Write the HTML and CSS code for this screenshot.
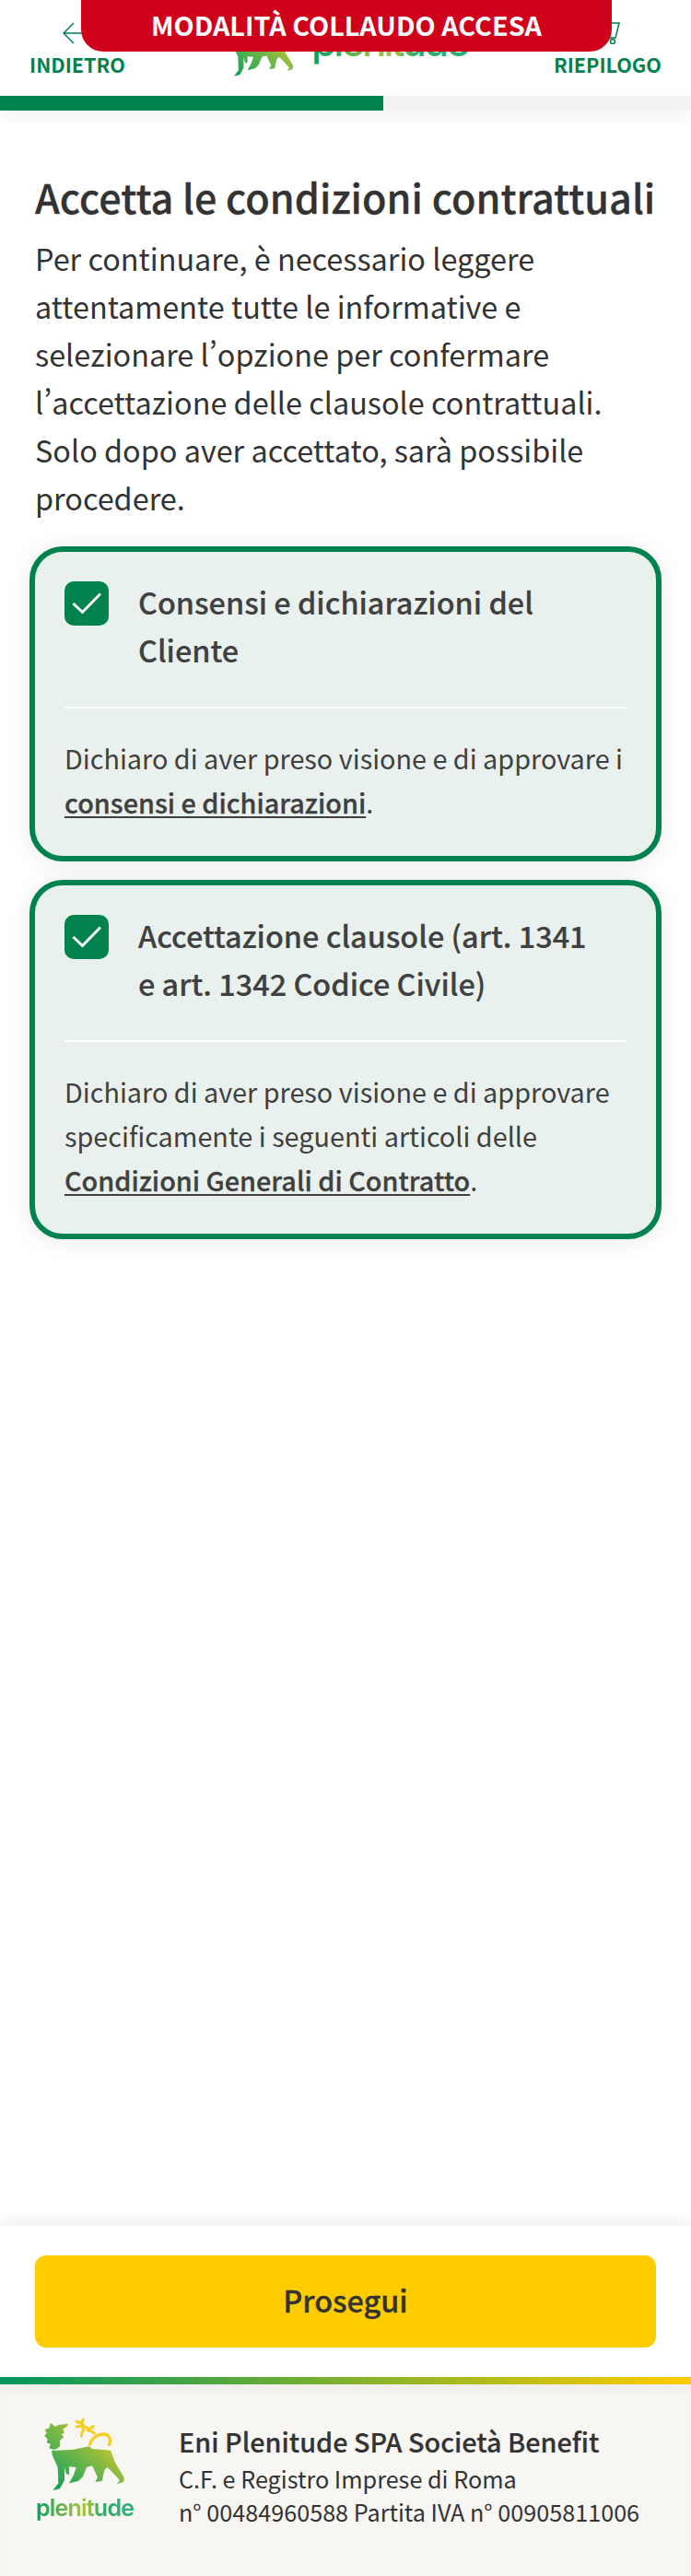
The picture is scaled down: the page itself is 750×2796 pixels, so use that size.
FILE: index.html
```html
<!DOCTYPE html>
<html lang="it">
<head>
  <title>Accetta le condizioni</title>
  <meta charset="utf-8">
  <link rel="stylesheet" href="styles.css">
</head>
<body>
  <svg class="defs" width="0" height="0">
    <defs>
      <linearGradient id="dogFill" x1="0.05" y1="1" x2="0.95" y2="0.1">
        <stop offset="0" stop-color="#00a15f"/>
        <stop offset="0.55" stop-color="#7db846"/>
        <stop offset="1" stop-color="#f7d117"/>
      </linearGradient>
      <linearGradient id="wordFill" x1="0" y1="0" x2="1" y2="0">
        <stop offset="0" stop-color="#00a15f"/>
        <stop offset="0.38" stop-color="#8fbb45"/>
        <stop offset="0.52" stop-color="#a9c23a"/>
        <stop offset="0.65" stop-color="#2eaa66"/>
        <stop offset="1" stop-color="#2eb27a"/>
      </linearGradient>
      <symbol id="dog" viewBox="0 0 420 390">
        <path fill="url(#dogFill)" d="M115 122L100 118 105 105 92 100 95 88 85 78 92 68 86 58 100 52 105 35 120 48 130 42 162 38 158 48 145 55 150 68 140 72 148 82 135 92 135 112 125 120ZM108 125L130 125 180 122 230 112 240 120 300 125 315 165 330 190 345 215 342 228 320 235 330 222 300 190 288 180 280 190 272 225 250 228 258 212 240 175 222 180 210 210 195 225 165 232 180 205 188 180 165 178 165 205 155 200 150 180 150 222 135 250 112 255 130 232 128 180 110 140Z"/>
        <path fill="none" stroke="#f4cf22" stroke-width="10" d="M232 110C236 88 256 72 276 72 296 72 304 92 294 110"/>
        <path fill="none" stroke="#f4cf22" stroke-width="9" d="M185 30C198 32 208 36 214 48M212 22C206 32 206 42 210 56M186 50C198 44 212 44 226 52M246 44C240 52 232 56 222 58M206 82C204 72 208 62 216 56M250 72C242 64 234 60 222 58"/>
      </symbol>
    </defs>
  </svg>

  <div class="page">
    <div class="banner">MODALITÀ COLLAUDO ACCESA</div>

    <header class="topbar">
      <a class="nav-link nav-back">
        <svg class="nav-icon" width="40" height="24" viewBox="0 0 40 24">
          <path d="M12 1L1 12l11 11M1 12h38" fill="none" stroke="#00824f" stroke-width="1.5"/>
        </svg>
        INDIETRO
      </a>
      <svg class="brand" width="290" height="84" viewBox="0 0 290 84">
        <use href="#dog" x="0" y="12" width="116" height="108"/>
        <text class="brand-word" x="115" y="61" textLength="172" fill="url(#wordFill)">plenitude</text>
      </svg>
      <a class="nav-link nav-cart">
        <svg class="nav-icon" width="40" height="24" viewBox="0 0 40 24">
          <path d="M4 1h30l-4 16H10" fill="none" stroke="#00824f" stroke-width="1.5"/>
          <circle cx="27" cy="21" r="2.5" fill="none" stroke="#00824f" stroke-width="1.5"/>
        </svg>
        RIEPILOGO
      </a>
    </header>
    <div class="progress"><div class="progress-fill"></div></div>

    <main class="content">
      <h1>Accetta le condizioni contrattuali</h1>
      <p class="intro">Per continuare, è necessario leggere attentamente tutte le informative e selezionare l’opzione per confermare l’accettazione delle clausole contrattuali. Solo dopo aver accettato, sarà possibile procedere.</p>

      <section class="card">
        <div class="card-head">
          <span class="check">
            <svg width="32" height="24" viewBox="0 0 32 24"><path d="M1.5 12l10 9.500L31 1.500" fill="none" stroke="#fff" stroke-width="3"/></svg>
          </span>
          <h2>Consensi e dichiarazioni del Cliente</h2>
        </div>
        <p class="card-text">Dichiaro di aver preso visione e di approvare i <a href="#">consensi e dichiarazioni</a>.</p>
      </section>

      <section class="card">
        <div class="card-head">
          <span class="check">
            <svg width="32" height="24" viewBox="0 0 32 24"><path d="M1.5 12l10 9.500L31 1.500" fill="none" stroke="#fff" stroke-width="3"/></svg>
          </span>
          <h2>Accettazione clausole (art. 1341 e art. 1342 Codice Civile)</h2>
        </div>
        <p class="card-text">Dichiaro di aver preso visione e di approvare specificamente i seguenti articoli delle <a href="#">Condizioni Generali di Contratto</a>.</p>
      </section>
    </main>

    <div class="actions">
      <button class="button">Prosegui</button>
    </div>

    <footer class="footer">
      <svg class="footer-logo" width="140" height="130" viewBox="0 0 140 130">
        <use href="#dog" x="0" y="0" width="140" height="130"/>
        <text class="footer-word" x="19" y="113" textLength="107" fill="url(#wordFill)">plenitude</text>
      </svg>
      <div class="footer-text">
        <strong>Eni Plenitude SPA Società Benefit</strong>
        <span>C.F. e Registro Imprese di Roma</span>
        <span>n° 00484960588 Partita IVA n° 00905811006</span>
      </div>
    </footer>
  </div>
</body>
</html>
```

FILE: styles.css
```css
* {
  box-sizing: border-box;
}

body {
  margin: 0;
  background: #fff;
  color: #333;
  font-family: "Noto Sans CJK SC", "Noto Sans", sans-serif;
}

.defs {
  position: absolute;
}

.page {
  position: relative;
  display: flex;
  flex-direction: column;
  height: 2796px;
  overflow: hidden;
}

/* test mode flag, lies over the header */
.banner {
  position: absolute;
  top: 0;
  left: 88px;
  z-index: 5;
  width: 576px;
  height: 56px;
  padding-top: 4px;
  background: #d0021b;
  border-radius: 0 0 24px 24px;
  color: #fff;
  font-size: 28.8px;
  line-height: 46px;
  font-weight: 700;
  text-align: center;
}

.topbar {
  display: flex;
  justify-content: space-between;
  height: 104px;
  padding: 0 32px;
  background: #fff;
}

.nav-link {
  display: flex;
  flex-direction: column;
  padding-top: 24px;
  color: #00824f;
  font-size: 21.6px;
  line-height: 44px;
  font-weight: 700;
}

.nav-back {
  align-items: flex-start;
}

.nav-back .nav-icon {
  margin-left: 36px;
}

.nav-cart {
  align-items: flex-end;
}

.nav-cart .nav-icon {
  margin-right: 40px;
}

.brand {
  flex: none;
}

.brand-word {
  font-family: Inter, sans-serif;
  font-size: 44px;
  font-weight: 500;
}

.progress {
  height: 16px;
  background: #f3f3f3;
  box-shadow: 0 6px 18px rgba(0, 0, 0, 0.06);
}

.progress-fill {
  width: 416px;
  height: 16px;
  background: #00824f;
}

.content {
  flex: 1;
  padding: 63px 32px 0;
}

h1 {
  margin: 0 6px 11px;
  font-size: 43.2px;
  line-height: 60px;
  font-weight: 500;
  white-space: nowrap;
  -webkit-text-stroke: 0.3px #333;
}

.intro {
  margin: 0 6px 27px;
  font-size: 32.4px;
  line-height: 52px;
  font-feature-settings: "pwid";
}

.card {
  margin-bottom: 20px;
  padding: 32px 32px 34px;
  background: #e9f1ee;
  border: 6px solid #00824f;
  border-radius: 36px;
  box-shadow: 0 2px 26px rgba(0, 0, 0, 0.09);
}

.card-head {
  display: flex;
  gap: 32px;
  padding-bottom: 36px;
  border-bottom: 2px solid #fff;
}

.check {
  display: flex;
  flex: none;
  align-items: center;
  justify-content: center;
  width: 48px;
  height: 48px;
  background: #00824f;
  border-radius: 10px;
}

h2 {
  margin: -4px 24px 0 0;
  font-size: 32.4px;
  line-height: 52px;
  font-weight: 500;
  color: #404040;
  -webkit-text-stroke: 0.2px #404040;
}

.card-text {
  margin: 30px 0 0;
  font-size: 28.8px;
  line-height: 48px;
  color: #404040;
}

.card-text a {
  color: #404040;
  font-weight: 500;
  -webkit-text-stroke: 0.3px #404040;
  text-decoration-thickness: 2px;
  text-underline-offset: 3px;
}

.actions {
  padding: 32px 38px;
  background: #fff;
  box-shadow: 0 -4px 16px rgba(0, 0, 0, 0.08);
}

.button {
  display: block;
  width: 100%;
  height: 100px;
  padding-bottom: 6px;
  background: #ffcc00;
  border: none;
  border-radius: 12px;
  color: #333;
  font-family: inherit;
  font-size: 32.4px;
  font-weight: 500;
  -webkit-text-stroke: 0.3px #333;
}

.footer {
  display: flex;
  height: 216px;
  padding-top: 32px;
  background: #f8f6f3;
  border-top: 8px solid;
  border-image: linear-gradient(90deg, #00965e, #ffcc00) 1;
  box-shadow: inset 0 10px 14px -8px rgba(0, 0, 0, 0.05);
}

.footer-logo {
  flex: none;
  margin: -2px 0 0 20px;
  filter: blur(0.5px);
}

.footer-word {
  font-family: Inter, sans-serif;
  font-size: 25px;
  font-weight: 600;
}

.footer-text {
  display: flex;
  flex-direction: column;
  margin: 8px 0 0 34px;
  font-size: 25.2px;
  line-height: 36px;
}

.footer-text strong {
  font-size: 28.8px;
  line-height: 44px;
  font-weight: 500;
  -webkit-text-stroke: 0.2px #333;
}
```
